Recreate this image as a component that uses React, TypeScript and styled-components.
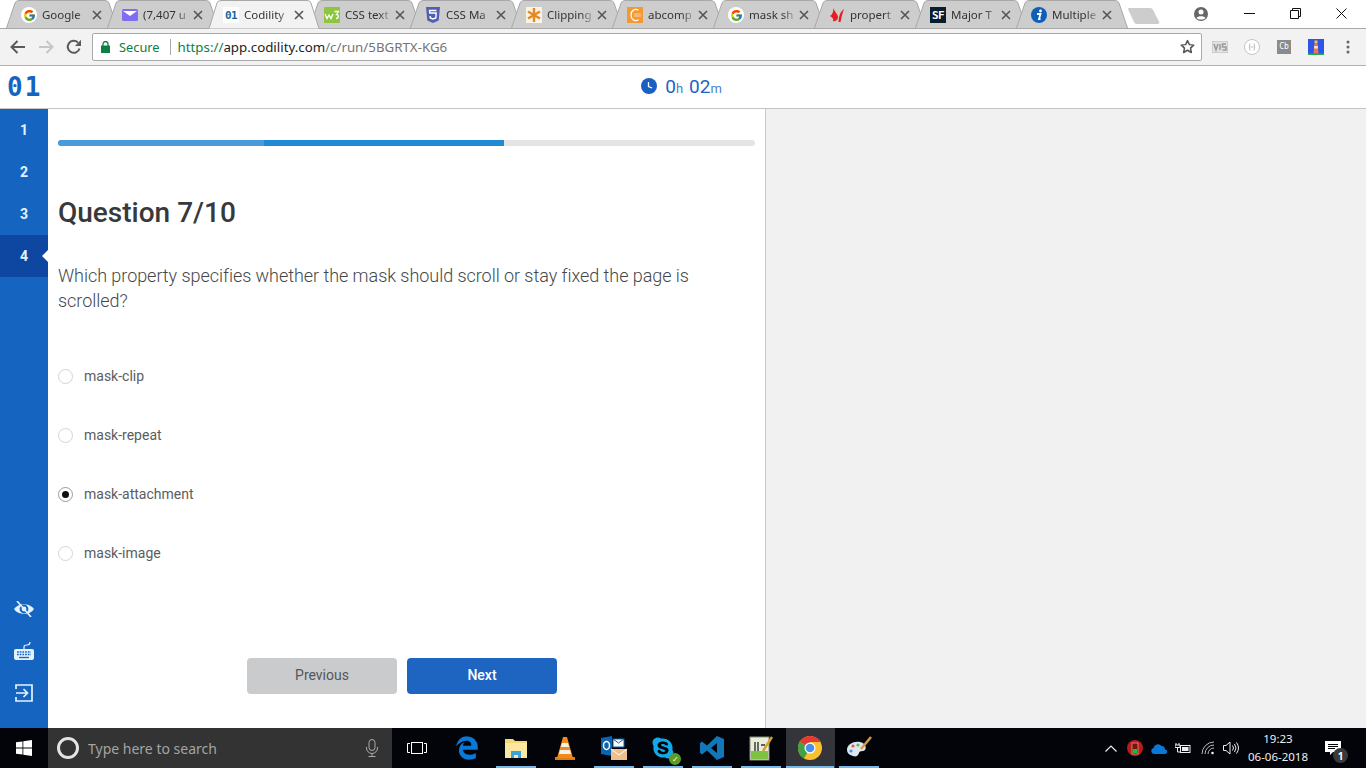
import React from 'react';
import styled, { createGlobalStyle } from 'styled-components';
import { FcGoogle } from 'react-icons/fc';
import { FaEdgeLegacy, FaSkype } from 'react-icons/fa';

const GlobalStyle = createGlobalStyle`
  html, body {
    margin: 0;
    padding: 0;
    background: #fff;
    overflow: hidden;
  }
  * {
    box-sizing: border-box;
  }
`;

const BrowserFont = `"Noto Sans", "Open Sans", sans-serif`;

const Page = styled.div`
  display: flex;
  flex-direction: column;
  width: 1366px;
  height: 768px;
  overflow: hidden;
  font-family: Roboto, sans-serif;
`;

/* tab strip */
const TabStrip = styled.div`
  display: flex;
  flex: none;
  align-items: stretch;
  height: 29px;
  padding-left: 6px;
  background: #fff;
  border-bottom: 1px solid #a8a8a8;
`;

const TabItem = styled.div<{ $active?: boolean }>`
  position: relative;
  z-index: ${(p) => (p.$active ? 20 : 1)};
  display: flex;
  flex: none;
  align-items: center;
  width: 112px;
  height: ${(p) => (p.$active ? '29px' : '28px')};
  margin-right: -11px;
  padding: ${(p) => (p.$active ? '1px' : '2px')} 0 0 15px;
  font-family: ${BrowserFont};
  font-size: 11.5px;
  color: #333;

  svg.shape {
    position: absolute;
    top: 0;
    left: 0;
    z-index: -1;
  }
`;

const FaviconBox = styled.span`
  display: flex;
  flex: none;
  align-items: center;
  justify-content: center;
  width: 16px;
  height: 16px;
`;

const FaviconRound = styled(FaviconBox)`
  background: #fff;
  border-radius: 50%;
`;

const FaviconText = styled(FaviconBox)<{ $bg: string; $fg: string }>`
  font-family: 'DejaVu Sans Mono', monospace;
  font-size: 11px;
  font-weight: 700;
  letter-spacing: -0.5px;
  color: ${(p) => p.$fg};
  background: ${(p) => p.$bg};
`;

const TabTitle = styled.span`
  flex: none;
  width: 45px;
  margin: 0 0 2px 5px;
  overflow: hidden;
  white-space: nowrap;
  -webkit-mask-image: linear-gradient(to right, #000 75%, rgba(0, 0, 0, 0.25) 100%);
  mask-image: linear-gradient(to right, #000 75%, rgba(0, 0, 0, 0.25) 100%);
`;

const TabClose = styled.svg`
  flex: none;
  width: 10px;
  height: 10px;
  margin-left: 5px;
`;

const NewTab = styled.svg`
  flex: none;
  align-self: flex-start;
  width: 34px;
  height: 18px;
  margin: 7px 0 0 10px;
`;

const WindowControls = styled.div`
  display: flex;
  align-items: flex-start;
  margin-left: auto;
  padding-right: 2px;
`;

const WindowButton = styled.div<{ $w: number }>`
  display: flex;
  align-items: center;
  justify-content: center;
  width: ${(p) => p.$w}px;
  height: 27px;
`;

/* toolbar */
const Toolbar = styled.div`
  display: flex;
  flex: none;
  align-items: center;
  height: 37px;
  padding: 0 0 1px 4px;
  background: #f2f2f2;
  border-bottom: 1px solid #b2b2b2;
`;

const NavButton = styled.div`
  display: flex;
  flex: none;
  align-items: center;
  justify-content: center;
  width: 28px;
  height: 28px;
`;

const Omnibox = styled.div`
  display: flex;
  flex: none;
  align-items: center;
  width: 1110px;
  height: 28px;
  margin: 0 2px 0 4px;
  padding: 0 6px 0 8px;
  background: #fff;
  border: 1px solid #aaa;
  border-radius: 2px;
  font-family: ${BrowserFont};
  font-size: 13.3px;
`;

const SecureLabel = styled.span`
  margin-left: 9px;
  font-size: 12.8px;
  color: #0b8043;
`;

const UrlDivider = styled.span`
  width: 1px;
  height: 16px;
  margin: 0 7px 0 10px;
  background: #aaa;
`;

const UrlText = styled.span`
  color: #757575;
  white-space: nowrap;
`;

const UrlScheme = styled.span`
  color: #0b8043;
`;

const UrlHost = styled.span`
  color: #222;
`;

const StarButton = styled.div`
  display: flex;
  margin-left: auto;
`;

const ExtensionButton = styled.div`
  display: flex;
  flex: none;
  align-items: center;
  justify-content: center;
  width: 32px;
  height: 28px;
`;

const CbBadge = styled.span`
  display: flex;
  align-items: center;
  justify-content: center;
  width: 14px;
  height: 14px;
  font-family: 'DejaVu Sans Mono', monospace;
  font-size: 8px;
  color: #fff;
  background: #8b8b8b;
`;

/* app header */
const Header = styled.header`
  position: relative;
  display: flex;
  flex: none;
  align-items: center;
  justify-content: center;
  height: 43px;
  padding-bottom: 2px;
  background: #fff;
  border-bottom: 1px solid #c4c4c4;
`;

const Logo = styled.div`
  position: absolute;
  top: 6px;
  left: 7px;
  font-family: 'DejaVu Sans Mono', monospace;
  font-size: 26px;
  font-weight: 700;
  letter-spacing: 2px;
  color: #1565c0;
`;

const Timer = styled.div`
  display: flex;
  align-items: baseline;
  margin-left: -3px;
  font-size: 19px;
  font-weight: 400;
  color: #1e63c4;

  svg {
    align-self: center;
    margin-right: 8px;
  }

  small {
    margin-right: 6px;
    font-size: 13px;
    font-weight: 400;
    color: #4a7fd0;
  }

  small:last-child {
    margin-right: 0;
  }
`;

/* main area */
const Main = styled.main`
  display: flex;
  flex: 1;
  min-height: 0;
`;

const Sidebar = styled.nav`
  display: flex;
  flex: none;
  flex-direction: column;
  width: 48px;
  padding-bottom: 14px;
  background: #1565c0;
`;

const StepItem = styled.div<{ $active?: boolean }>`
  position: relative;
  display: flex;
  flex: none;
  align-items: center;
  justify-content: center;
  height: 42px;
  font-size: 14px;
  font-weight: 700;
  color: #e3f2fd;
  background: ${(p) => (p.$active ? '#0d47a1' : 'transparent')};

  ${(p) =>
    p.$active &&
    `
    &::after {
      content: '';
      position: absolute;
      top: 15px;
      right: 0;
      border: 6px solid transparent;
      border-right-color: #fff;
    }
  `}
`;

const SideTools = styled.div`
  display: flex;
  flex-direction: column;
  margin-top: auto;
`;

const ToolButton = styled.div`
  display: flex;
  align-items: center;
  justify-content: center;
  height: 42px;
`;

const QuestionPanel = styled.section`
  display: flex;
  flex: none;
  flex-direction: column;
  width: 718px;
  padding: 31px 10px 34px;
  background: #fff;
  border-right: 1px solid #c9c9c9;
`;

const ProgressTrack = styled.div`
  position: relative;
  flex: none;
  height: 6px;
  overflow: hidden;
  background: #e4e4e4;
  border-radius: 3px;
`;

const ProgressFill = styled.div<{ $color: string; $z: number }>`
  position: absolute;
  top: 0;
  bottom: 0;
  left: 0;
  z-index: ${(p) => p.$z};
  background: ${(p) => p.$color};
  border-radius: 3px 0 0 3px;
`;

const Title = styled.h1`
  margin: 49px 0 0;
  font-size: 28px;
  font-weight: 500;
  line-height: 36px;
  color: #37393b;
`;

const Prompt = styled.p`
  margin: 32px 0 0;
  max-width: 660px;
  font-size: 18px;
  font-weight: 300;
  line-height: 25px;
  letter-spacing: -0.045px;
  color: #44484b;
`;

const Options = styled.div`
  display: flex;
  flex-direction: column;
  gap: 35px;
  margin-top: 51px;
`;

const Option = styled.label`
  display: flex;
  align-items: center;
  height: 24px;
  font-size: 14px;
  color: #5a5d60;
`;

const Radio = styled.span<{ $checked?: boolean }>`
  display: flex;
  flex: none;
  align-items: center;
  justify-content: center;
  width: 15px;
  height: 15px;
  margin-right: 11px;
  background: #fff;
  border: 1px solid ${(p) => (p.$checked ? '#9b9b9b' : '#d4d4d5')};
  border-radius: 50%;

  &::after {
    content: '';
    display: ${(p) => (p.$checked ? 'block' : 'none')};
    width: 7px;
    height: 7px;
    background: #111;
    border-radius: 50%;
  }
`;

const Actions = styled.div`
  display: flex;
  gap: 10px;
  justify-content: center;
  margin-top: auto;
  padding-right: 9px;
`;

const ActionButton = styled.button<{ $primary?: boolean }>`
  width: 150px;
  height: 36px;
  padding: 0 0 2px;
  font-family: Roboto, sans-serif;
  font-size: 14px;
  font-weight: ${(p) => (p.$primary ? 500 : 400)};
  color: ${(p) => (p.$primary ? '#fff' : '#54575a')};
  background: ${(p) => (p.$primary ? '#1e65c2' : '#cacbcd')};
  border: 0;
  border-radius: 4px;
`;

const SidePanel = styled.aside`
  flex: 1;
  background: #f1f1f1;
`;

/* windows taskbar */
const Taskbar = styled.footer`
  display: flex;
  flex: none;
  align-items: stretch;
  height: 40px;
  color: #fff;
  background: #03040a;
`;

const StartButton = styled.div`
  display: flex;
  flex: none;
  align-items: center;
  justify-content: center;
  width: 48px;
`;

const SearchBox = styled.div`
  display: flex;
  flex: none;
  align-items: center;
  width: 344px;
  padding: 0 14px 0 9px;
  font-family: ${BrowserFont};
  font-size: 14px;
  color: #a4a4a4;
  background: #333;
`;

const Cortana = styled.span`
  flex: none;
  width: 22px;
  height: 22px;
  margin-right: 9px;
  border: 3px solid #e4e4e4;
  border-radius: 50%;
`;

const MicIcon = styled.svg`
  margin-left: auto;
`;

const TaskSlot = styled.div<{ $running?: boolean; $current?: boolean }>`
  position: relative;
  display: flex;
  flex: none;
  align-items: center;
  justify-content: center;
  width: 49px;
  background: ${(p) => (p.$current ? '#33353a' : 'transparent')};

  ${(p) =>
    p.$running &&
    `
    &::after {
      content: '';
      position: absolute;
      bottom: 0;
      left: ${p.$current ? 0 : 4}px;
      right: ${p.$current ? 1 : 5}px;
      height: 2px;
      background: #76b9ed;
    }
  `}
`;

const TaskView = styled(TaskSlot)`
  margin-right: 1.5px;
`;

const SkypeWrap = styled.span`
  position: relative;
  display: flex;
`;

const SkypeBadge = styled.span`
  position: absolute;
  right: -6px;
  bottom: -5px;
  display: flex;
  align-items: center;
  justify-content: center;
  width: 12px;
  height: 12px;
  font-size: 8px;
  color: #fff;
  background: #5d9b28;
  border-radius: 50%;
`;

const Tray = styled.div`
  display: flex;
  align-items: center;
  margin-left: auto;
`;

const TrayIcon = styled.div<{ $w: number }>`
  display: flex;
  align-items: center;
  justify-content: center;
  width: ${(p) => p.$w}px;
  height: 40px;
`;

const Clock = styled.div`
  width: 72px;
  margin-right: 3px;
  font-family: ${BrowserFont};
  font-size: 11.5px;
  line-height: 18px;
  text-align: center;
  color: #eee;
`;

const NotifyWrap = styled.div`
  position: relative;
  display: flex;
  align-items: center;
  justify-content: center;
  width: 49px;
  height: 40px;
  padding-right: 17px;
`;

const NotifyCount = styled.span`
  position: absolute;
  top: 20px;
  left: 16px;
  display: flex;
  align-items: center;
  justify-content: center;
  width: 15px;
  height: 15px;
  font-family: ${BrowserFont};
  font-size: 10px;
  font-weight: 700;
  color: #fff;
  background: #3a3a3a;
  border-radius: 50%;
`;

/* favicons */
const MailFavicon = () => (
  <FaviconBox>
    <svg width="16" height="16" viewBox="0 0 16 16">
      <rect y="2" width="16" height="12" rx="1.5" fill="#7d6ff0" />
      <path d="M1 4h14L8 9z" fill="#fff" />
    </svg>
  </FaviconBox>
);

const W3Favicon = () => (
  <FaviconBox>
    <svg width="16" height="16" viewBox="0 0 16 16">
      <rect width="16" height="16" rx="1" fill="#8cc63e" />
      <path d="M1 7l2 4.500 2-3.500 2 3.500 2-4.500M10.500 4.500h4l-2 3c2.500 0 2.500 4-.5 4" stroke="#fff" strokeWidth="1.3" fill="none" />
    </svg>
  </FaviconBox>
);

const CssFavicon = () => (
  <FaviconBox>
    <svg width="16" height="16" viewBox="0 0 16 16">
      <path d="M1 0h14l-1.3 13.5L8 16l-5.7-2.5z" fill="#4f5fb5" />
      <path d="M11.5 3.5h-7l.3 2.5h6.4l-.4 5L8 12l-2.7-1-.2-2" stroke="#fff" strokeWidth="1.4" fill="none" />
    </svg>
  </FaviconBox>
);

const ClipFavicon = () => (
  <FaviconBox>
    <svg width="16" height="16" viewBox="0 0 16 16">
      <rect width="16" height="16" fill="#fdf3e4" />
      <path d="M8 1v14M2 4.5l12 7M14 4.5l-12 7" stroke="#e58a22" strokeWidth="2.4" />
    </svg>
  </FaviconBox>
);

const AbcFavicon = () => (
  <FaviconBox>
    <svg width="16" height="16" viewBox="0 0 16 16">
      <rect width="16" height="16" fill="#f5982f" />
      <path d="M11.5 3.2C8 1 4 3.5 4 8s4 7 7.5 4.8" stroke="#fff" strokeWidth="1.3" fill="none" />
      <path d="M7 7h7M7 9h7" stroke="#fbd6a6" strokeWidth="1" />
    </svg>
  </FaviconBox>
);

const PropertyFavicon = () => (
  <FaviconBox>
    <svg width="16" height="16" viewBox="0 0 16 16">
      <path d="M1 9C3 8 4.500 5 4.500 1 5.500 5 9 7 9 10c0 3-3 5-5 4 1-2-1-4-3-5z" fill="#e81c23" />
      <path d="M9.500 15C10 9 11 5 15 2c-1.500 4-2.500 8-3.500 13z" fill="#e81c23" />
    </svg>
  </FaviconBox>
);

const InfoFavicon = () => (
  <FaviconBox>
    <svg width="16" height="16" viewBox="0 0 16 16">
      <circle cx="8" cy="8" r="8" fill="#0f5fb8" />
      <circle cx="9.5" cy="4" r="1.4" fill="#fff" />
      <path d="M6 7h3.500L8 12h1.500" stroke="#fff" strokeWidth="1.8" fill="none" />
    </svg>
  </FaviconBox>
);

const GoogleFavicon = () => (
  <FaviconRound>
    <FcGoogle size={13} />
  </FaviconRound>
);

interface ITab {
  title: string;
  icon: React.ReactNode;
  active?: boolean;
}

const tabs: ITab[] = [
  { title: 'Google', icon: <GoogleFavicon /> },
  { title: '(7,407 u', icon: <MailFavicon /> },
  { title: 'Codility', icon: <FaviconText $bg="#fff" $fg="#1b6496">01</FaviconText>, active: true },
  { title: 'CSS text', icon: <W3Favicon /> },
  { title: 'CSS Ma', icon: <CssFavicon /> },
  { title: 'Clipping', icon: <ClipFavicon /> },
  { title: 'abcomp', icon: <AbcFavicon /> },
  { title: 'mask sh', icon: <GoogleFavicon /> },
  { title: 'propert', icon: <PropertyFavicon /> },
  { title: 'Major T', icon: <FaviconText $bg="#0b1c2c" $fg="#fff">SF</FaviconText> },
  { title: 'Multiple', icon: <InfoFavicon /> },
];

const Tab = ({ title, icon, active }: ITab) => (
  <TabItem $active={active}>
    <svg className="shape" width="112" height={active ? 29 : 28} viewBox={`0 0 112 ${active ? 29 : 28}`}>
      <path
        d={
          active
            ? 'M0 28.5 H1 L9 3 Q10 .5 13 .5 H99 Q102 .5 103 3 L111 28.5 H112'
            : 'M.5 28 L9 3 Q10 .5 13 .5 H99 Q102 .5 103 3 L111.5 28'
        }
        fill={active ? '#f2f2f2' : '#cdcdcd'}
        stroke="#a8a8a8"
      />
    </svg>
    {icon}
    <TabTitle>{title}</TabTitle>
    <TabClose viewBox="0 0 10 10">
      <path d="M1 1l8 8M9 1l-8 8" stroke="#555" strokeWidth="1.6" />
    </TabClose>
  </TabItem>
);

const taskApps = [
  {
    key: 'edge',
    icon: <FaEdgeLegacy size={24} color="#0a78d7" />,
  },
  {
    key: 'explorer',
    running: true,
    icon: (
      <svg width="24" height="22" viewBox="0 0 24 22">
        <path d="M1 2h8l2 2h12v17H1z" fill="#f6d776" />
        <rect x="1" y="6" width="22" height="15" fill="#fbe7a2" />
        <path d="M7 21v-7h10v7h-3v-3h-4v3z" fill="#37a4dc" />
      </svg>
    ),
  },
  {
    key: 'vlc',
    icon: (
      <svg width="22" height="24" viewBox="0 0 22 24">
        <path d="M1 21h20v3H1z" fill="#e07b12" />
        <path d="M9 1h4l6 21H3z" fill="#f08a1c" />
        <path d="M8 7h6l1.2 4H6.8zM6 14h10l1 4H5z" fill="#f4f1ea" />
      </svg>
    ),
  },
  {
    key: 'outlook',
    running: true,
    icon: (
      <svg width="26" height="26" viewBox="0 0 26 26">
        <path d="M0 3l11-2v20L0 19z" fill="#0a64b0" />
        <ellipse cx="5.5" cy="10.5" rx="3" ry="4" fill="none" stroke="#fff" strokeWidth="1.5" />
        <rect x="12" y="4" width="11" height="8" fill="#fff" stroke="#0a64b0" />
        <path d="M12 4l5.500 4L23 4" fill="none" stroke="#0a64b0" />
        <rect x="10" y="14" width="16" height="11" fill="#f0c08a" />
        <path d="M10 14l8 6 8-6" fill="none" stroke="#fff" />
      </svg>
    ),
  },
  {
    key: 'skype',
    running: true,
    icon: (
      <SkypeWrap>
        <FaSkype size={24} color="#11a9e6" />
        <SkypeBadge>✓</SkypeBadge>
      </SkypeWrap>
    ),
  },
  {
    key: 'vscode',
    running: true,
    icon: (
      <svg width="24" height="24" viewBox="0 0 24 24">
        <path d="M17 0l7 3v18l-7 3-10-9.500-5 4L0 17V7l2-1.500 5 4zM17 7l-6 5 6 5z" fill="#1277b8" fillRule="evenodd" />
      </svg>
    ),
  },
  {
    key: 'notepad',
    running: true,
    icon: (
      <svg width="24" height="26" viewBox="0 0 24 26">
        <rect x="1" y="2" width="19" height="23" fill="#e8efd8" stroke="#8a8a7a" />
        <rect x="2" y="16" width="17" height="8" fill="#7fc241" />
        <path d="M6 7v9M9 7v9M12 10h4" stroke="#333" strokeWidth="1.4" />
        <path d="M23 2l-9 14" stroke="#d8a02c" strokeWidth="2.4" />
      </svg>
    ),
  },
  {
    key: 'chrome',
    running: true,
    current: true,
    icon: (
      <svg width="24" height="24" viewBox="0 0 24 24">
        <circle cx="12" cy="12" r="12" fill="#fbc02d" />
        <path d="M12 12L1.6 6A12 12 0 0 1 22.4 6H12z" fill="#e53935" />
        <path d="M12 12l-6 10.4A12 12 0 0 1 1.6 6z" fill="#43a047" />
        <circle cx="12" cy="12" r="5.5" fill="#fff" />
        <circle cx="12" cy="12" r="4.3" fill="#4a8fe8" />
      </svg>
    ),
  },
  {
    key: 'paint',
    running: true,
    icon: (
      <svg width="26" height="24" viewBox="0 0 26 24">
        <path d="M1 14C1 8 8 5 14 6c5 1 7 5 5 8-2 2-5 0-6 3-1 3-3 4-6 3-4-1-6-3-6-6z" fill="#dfe6ee" />
        <circle cx="7" cy="10" r="1.6" fill="#e45b4d" />
        <circle cx="12" cy="9" r="1.6" fill="#6cb84a" />
        <circle cx="5" cy="15" r="1.6" fill="#3d9be0" />
        <path d="M25 1L15 13" stroke="#d59a45" strokeWidth="2.5" />
      </svg>
    ),
  },
];

const App = () => {
  return (
    <Page>
      <GlobalStyle />

      <TabStrip>
        {tabs.map((tab) => (
          <Tab key={tab.title} {...tab} />
        ))}
        <NewTab viewBox="0 0 36 20">
          <path d="M1 1h24q2 0 3 2l7 14q.5 2-2 2H10q-2 0-3-2L.5 3Q0 1 1 1z" fill="#cdcdcd" />
        </NewTab>
        <WindowControls>
          <WindowButton $w={50}>
            <svg width="16" height="16" viewBox="0 0 16 16">
              <circle cx="8" cy="8" r="7" fill="#666" />
              <circle cx="8" cy="6" r="2.5" fill="#fff" />
              <path d="M3.5 12c1-2.500 8-2.500 9 0-2 2-7 2-9 0z" fill="#fff" />
            </svg>
          </WindowButton>
          <WindowButton $w={46}>
            <svg width="11" height="11" viewBox="0 0 11 11">
              <path d="M0 5.5h11" stroke="#111" />
            </svg>
          </WindowButton>
          <WindowButton $w={46}>
            <svg width="11" height="11" viewBox="0 0 11 11">
              <path d="M.5 2.500h8v8h-8zM2.500 2.500v-2h8v8h-2" fill="none" stroke="#111" />
            </svg>
          </WindowButton>
          <WindowButton $w={46}>
            <svg width="11" height="11" viewBox="0 0 11 11">
              <path d="M.5.500l10 10M10.500.500l-10 10" stroke="#111" />
            </svg>
          </WindowButton>
        </WindowControls>
      </TabStrip>

      <Toolbar>
        <NavButton>
          <svg width="16" height="14" viewBox="0 0 16 14">
            <path d="M15 7H2M7.500 1L1.500 7l6 6" fill="none" stroke="#5a5a5a" strokeWidth="2" />
          </svg>
        </NavButton>
        <NavButton>
          <svg width="16" height="14" viewBox="0 0 16 14">
            <path d="M1 7h13M8.500 1l6 6-6 6" fill="none" stroke="#c6c6c6" strokeWidth="2" />
          </svg>
        </NavButton>
        <NavButton>
          <svg width="16" height="16" viewBox="0 0 16 16">
            <path d="M13.500 9.500A6 6 0 1 1 12 3.600" fill="none" stroke="#5a5a5a" strokeWidth="2" />
            <path d="M15 .8V7H9z" fill="#5a5a5a" />
          </svg>
        </NavButton>
        <Omnibox>
          <svg width="9" height="12" viewBox="0 0 9 12">
            <rect y="4.5" width="9" height="7.5" rx=".5" fill="#0b8043" />
            <path d="M2 5V3a2.500 2.500 0 0 1 5 0v2" fill="none" stroke="#0b8043" strokeWidth="1.3" />
          </svg>
          <SecureLabel>Secure</SecureLabel>
          <UrlDivider />
          <UrlText>
            <UrlScheme>https://</UrlScheme>
            <UrlHost>app.codility.com</UrlHost>/c/run/5BGRTX-KG6
          </UrlText>
          <StarButton>
            <svg width="15" height="15" viewBox="0 0 24 24">
              <path d="M12 2.500l3 6.500 7 .8-5.200 4.800 1.400 7L12 18l-6.200 3.600 1.400-7L2 9.800 9 9z" fill="none" stroke="#555" strokeWidth="2.4" strokeLinejoin="round" />
            </svg>
          </StarButton>
        </Omnibox>
        <ExtensionButton>
          <svg width="16" height="12" viewBox="0 0 16 12">
            <rect width="16" height="12" fill="#e2e2e2" stroke="#bbb" />
            <path d="M2 3l2 6 2-6M8 3v6M14 3h-3.500v3H14v3h-3.500" fill="none" stroke="#999" strokeWidth="1.5" />
          </svg>
        </ExtensionButton>
        <ExtensionButton>
          <svg width="16" height="16" viewBox="0 0 16 16">
            <circle cx="8" cy="8" r="7.5" fill="#fff" stroke="#c4c4c4" />
            <path d="M6 4.500Q4.500 8 6 11.500M10 4.500q1.500 3.500 0 7M6.500 8h3" fill="none" stroke="#bbb" />
          </svg>
        </ExtensionButton>
        <ExtensionButton>
          <CbBadge>Cb</CbBadge>
        </ExtensionButton>
        <ExtensionButton>
          <svg width="16" height="16" viewBox="0 0 16 16">
            <rect width="16" height="16" fill="#2f55e8" />
            <rect y="14.5" width="16" height="1.5" fill="#17b34a" />
            <path d="M6.500 4h3l1 10.500h-5z" fill="#f0705a" />
            <path d="M6.200 7h3.600l.2 2.500H6z" fill="#f6e6c8" />
            <rect x="6.5" y="1.5" width="3" height="2.5" fill="#f6c24d" />
          </svg>
        </ExtensionButton>
        <ExtensionButton>
          <svg width="4" height="14" viewBox="0 0 4 14">
            <circle cx="2" cy="2" r="1.5" fill="#666" />
            <circle cx="2" cy="7" r="1.5" fill="#666" />
            <circle cx="2" cy="12" r="1.5" fill="#666" />
          </svg>
        </ExtensionButton>
      </Toolbar>

      <Header>
        <Logo>01</Logo>
        <Timer>
          <svg width="16" height="16" viewBox="0 0 16 16">
            <circle cx="8" cy="8" r="8" fill="#1a5fc4" />
            <path d="M7.500 4v4.500l3.500 1.500" fill="none" stroke="#fff" strokeWidth="1.3" />
          </svg>
          0<small>h</small>02<small>m</small>
        </Timer>
      </Header>

      <Main>
        <Sidebar>
          <StepItem>1</StepItem>
          <StepItem>2</StepItem>
          <StepItem>3</StepItem>
          <StepItem $active>4</StepItem>
          <SideTools>
            <ToolButton>
              <svg width="20" height="16" viewBox="0 0 20 16">
                <path d="M0 8C4 1.500 16 1.500 20 8 16 14.500 4 14.500 0 8z" fill="#e3f2fd" />
                <circle cx="10" cy="8" r="4.400" fill="#1565c0" />
                <circle cx="10" cy="8" r="2.400" fill="#e3f2fd" />
                <path d="M3 0l14 16" stroke="#e3f2fd" strokeWidth="1.6" />
              </svg>
            </ToolButton>
            <ToolButton>
              <svg width="20" height="20" viewBox="0 0 20 20">
                <path d="M10 9V6q0-2 3-2 3 0 3-3" fill="none" stroke="#e3f2fd" strokeWidth="1.2" />
                <rect y="8" width="20" height="11" rx="2" fill="#e3f2fd" />
                <path d="M3 11h14M3 13.500h14" stroke="#1565c0" strokeWidth="1.3" strokeDasharray="1.7 1" />
                <path d="M5 16.500h10" stroke="#1565c0" strokeWidth="1.3" />
              </svg>
            </ToolButton>
            <ToolButton>
              <svg width="18" height="18" viewBox="0 0 18 18">
                <path d="M1 5V1h16v16H1v-4" fill="none" stroke="#e3f2fd" strokeWidth="1.7" />
                <path d="M1 9h11M8.500 5l4 4-4 4" fill="none" stroke="#e3f2fd" strokeWidth="1.7" />
              </svg>
            </ToolButton>
          </SideTools>
        </Sidebar>

        <QuestionPanel>
          <ProgressTrack>
            <ProgressFill $color="#218ad4" $z={1} style={{ width: '64%' }} />
            <ProgressFill $color="#4a9bd9" $z={2} style={{ width: '29.6%' }} />
          </ProgressTrack>
          <Title>Question 7/10</Title>
          <Prompt>Which property specifies whether the mask should scroll or stay fixed the page is scrolled?</Prompt>
          <Options>
            <Option>
              <Radio />
              mask-clip
            </Option>
            <Option>
              <Radio />
              mask-repeat
            </Option>
            <Option>
              <Radio $checked />
              mask-attachment
            </Option>
            <Option>
              <Radio />
              mask-image
            </Option>
          </Options>
          <Actions>
            <ActionButton>Previous</ActionButton>
            <ActionButton $primary>Next</ActionButton>
          </Actions>
        </QuestionPanel>

        <SidePanel />
      </Main>

      <Taskbar>
        <StartButton>
          <svg width="16" height="16" viewBox="0 0 16 16">
            <path d="M0 2.300l6.500-.9v6.200H0zM7.300 1.300L16 0v7.600H7.300zM0 8.400h6.500v6.200L0 13.700zM7.300 8.400H16V16l-8.700-1.300z" fill="#fff" />
          </svg>
        </StartButton>
        <SearchBox>
          <Cortana />
          Type here to search
          <MicIcon width="12" height="18" viewBox="0 0 12 18">
            <rect x="3" y=".5" width="6" height="11" rx="3" fill="none" stroke="#aaa" />
            <path d="M.5 8v1a5.500 5.500 0 0 0 11 0V8M6 14.500v3M2.500 17.500h7" fill="none" stroke="#aaa" />
          </MicIcon>
        </SearchBox>
        <TaskView>
          <svg width="20" height="12" viewBox="0 0 20 12">
            <path d="M3 1.500H.5v9H3M17 1.500h2.500v9H17" fill="none" stroke="#fff" />
            <rect x="4.5" y=".5" width="11" height="11" fill="none" stroke="#fff" />
          </svg>
        </TaskView>
        {taskApps.map((app) => (
          <TaskSlot key={app.key} $running={app.running} $current={app.current}>
            {app.icon}
          </TaskSlot>
        ))}
        <Tray>
          <TrayIcon $w={18}>
            <svg width="12" height="7" viewBox="0 0 12 7">
              <path d="M.5 6.500L6 1l5.500 5.500" fill="none" stroke="#eee" strokeWidth="1.2" />
            </svg>
          </TrayIcon>
          <TrayIcon $w={30}>
            <svg width="16" height="16" viewBox="0 0 16 16">
              <circle cx="8" cy="8" r="8" fill="#b71c1c" />
              <rect x="5" y="3" width="6" height="11" fill="#7a1010" stroke="#f5c6c6" strokeWidth=".6" />
              <rect x="5.8" y="9" width="4.4" height="4" fill="#16c12d" />
            </svg>
          </TrayIcon>
          <TrayIcon $w={18}>
            <svg width="17" height="11" viewBox="0 0 17 11">
              <path d="M3 11a3 3 0 0 1-.5-5.900A4.500 4.500 0 0 1 10.500 3 3.500 3.500 0 0 1 14 6.500 2.300 2.300 0 0 1 14.500 11z" fill="#0a78d7" />
            </svg>
          </TrayIcon>
          <TrayIcon $w={30}>
            <svg width="16" height="11" viewBox="0 0 16 11">
              <rect x="5.5" y="2.5" width="9.500" height="7" fill="none" stroke="#eee" />
              <rect x="7" y="4" width="6.5" height="4" fill="#eee" />
              <path d="M1 0v2M4 0v2M0 2h5v2.500H0zM2.500 4.500V9H5" fill="none" stroke="#eee" />
            </svg>
          </TrayIcon>
          <TrayIcon $w={22}>
            <svg width="16" height="14" viewBox="0 0 16 14">
              <path d="M1 13A12 12 0 0 1 13 1M4 13a9 9 0 0 1 9-9M7 13a6 6 0 0 1 6-6" fill="none" stroke="#bbb" />
              <circle cx="11.5" cy="12" r="1.3" fill="#eee" />
            </svg>
          </TrayIcon>
          <TrayIcon $w={22}>
            <svg width="16" height="14" viewBox="0 0 16 14">
              <path d="M.5 4.500h2.500L7 1v12L3 9.500H.5z" fill="none" stroke="#eee" />
              <path d="M9.500 4.500q2 2.500 0 5M11.500 3q3 4 0 8M13.500 1.500q4 5.500 0 11" fill="none" stroke="#eee" />
            </svg>
          </TrayIcon>
          <Clock>
            19:23
            <br />
            06-06-2018
          </Clock>
          <NotifyWrap>
            <svg width="16" height="15" viewBox="0 0 16 15">
              <path d="M0 0h16v11H8l-3 3v-3H0z" fill="#fff" />
              <path d="M3 3.500h10M3 5.500h10M3 7.500h7" stroke="#03040a" />
            </svg>
            <NotifyCount>1</NotifyCount>
          </NotifyWrap>
        </Tray>
      </Taskbar>
    </Page>
  );
};

export default App;
